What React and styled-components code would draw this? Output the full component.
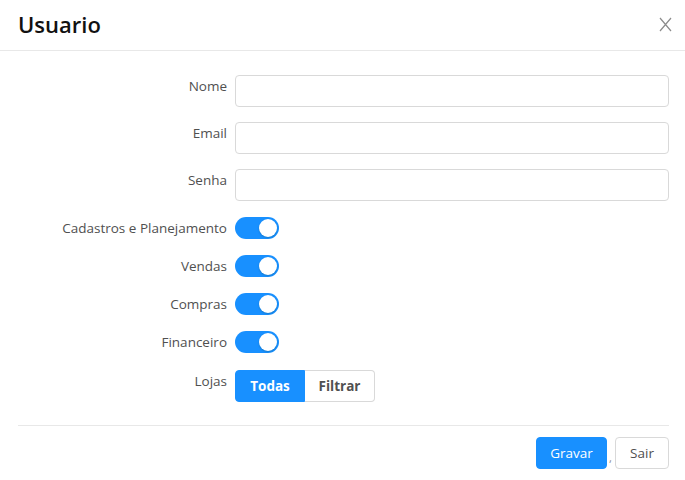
import React from "react";
import styled, { createGlobalStyle } from "styled-components";

const Global = createGlobalStyle`
  html, body { margin: 0; padding: 0; background: #fff; }
  body { font-family: "Open Sans", "Noto Sans", sans-serif; }
  * { box-sizing: border-box; }
`;

const Modal = styled.div`
  width: 685px;
  height: 480px;
  background: #fff;
  display: flex;
  flex-direction: column;
`;

const Header = styled.div`
  height: 51px;
  border-bottom: 1px solid #e8e8e8;
  display: flex;
  align-items: center;
  justify-content: space-between;
  padding: 0 13px 0 18px;
`;

const Title = styled.h1`
  margin: 0;
  font-size: 22px;
  font-weight: 600;
  color: #111;
  line-height: 1;
  margin-top: -2px;
`;

const Close = styled.button`
  border: 0;
  background: transparent;
  padding: 0;
  width: 14px;
  height: 16px;
  display: flex;
  align-items: center;
  justify-content: center;
  cursor: pointer;
  margin-top: -1px;
`;

const Body = styled.div`
  padding: 24px 16px 0 18px;
  display: flex;
  flex-direction: column;
`;

const Row = styled.div`
  display: grid;
  grid-template-columns: 209px 1fr;
  column-gap: 8px;
  align-items: start;
  margin-bottom: ${(p) => p.$mb ?? 0}px;
`;

const Label = styled.label`
  text-align: right;
  font-size: 13.5px;
  line-height: 22px;
  color: #505050;
  white-space: nowrap;
`;

const Input = styled.input`
  height: 32px;
  width: 100%;
  border: 1px solid #d9d9d9;
  border-radius: 4px;
  padding: 4px 11px;
  font-size: 14px;
  font-family: inherit;
  outline: none;
`;

const Switch = styled.button`
  width: 44px;
  height: 22px;
  border-radius: 11px;
  border: 0;
  background: #1890ff;
  padding: 2px;
  display: flex;
  justify-content: flex-end;
  cursor: pointer;
`;

const Knob = styled.span`
  width: 18px;
  height: 18px;
  border-radius: 50%;
  background: #fff;
  box-shadow: 0 1px 2px rgba(0, 35, 11, 0.2);
`;

const Segmented = styled.div`
  display: flex;
`;

const SegButton = styled.button`
  width: 70px;
  height: 32px;
  font-family: inherit;
  font-size: 13.5px;
  font-weight: 700;
  cursor: pointer;
  border: 1px solid ${(p) => (p.$active ? "#1890ff" : "#d9d9d9")};
  background: ${(p) => (p.$active ? "#1890ff" : "#fff")};
  color: ${(p) => (p.$active ? "#fff" : "#505050")};
  border-left-width: ${(p) => (p.$first ? 1 : 0)}px;
  border-radius: ${(p) => (p.$first ? "4px 0 0 4px" : "0 4px 4px 0")};
`;

const Footer = styled.div`
  margin: 23px 16px 0 18px;
  border-top: 1px solid #e8e8e8;
  padding-top: 11px;
  display: flex;
  justify-content: flex-end;
  align-items: flex-end;
`;

const Button = styled.button`
  height: 32px;
  padding: 0 10px;
  font-family: inherit;
  font-size: 13.5px;
  border-radius: 4px;
  cursor: pointer;
  border: 1px solid ${(p) => (p.$primary ? "#1890ff" : "#d9d9d9")};
  background: ${(p) => (p.$primary ? "#1890ff" : "#fff")};
  color: ${(p) => (p.$primary ? "#fff" : "#505050")};
  width: ${(p) => p.$w}px;
`;

const Sep = styled.span`
  font-size: 11px;
  color: #8c8c8c;
  width: 8px;
  padding-left: 2px;
  line-height: 1;
  margin-bottom: 6px;
`;

const fields = ["Nome", "Email", "Senha"];
const toggles = ["Cadastros e Planejamento", "Vendas", "Compras", "Financeiro"];

export default function App() {
  return (
    <Modal>
      <Global />
      <Header>
        <Title>Usuario</Title>
        <Close aria-label="Fechar">
          <svg width="13" height="15" viewBox="0 0 13 15">
            <path d="M1 1 L12 14 M12 1 L1 14" stroke="#8c8c8c" strokeWidth="1.2" fill="none" />
          </svg>
        </Close>
      </Header>
      <Body>
        {fields.map((f, i) => (
          <Row key={f} $mb={i === fields.length - 1 ? 16 : 15}>
            <Label>{f}</Label>
            <Input type={f === "Senha" ? "password" : "text"} />
          </Row>
        ))}
        {toggles.map((t, i) => (
          <Row key={t} $mb={i === toggles.length - 1 ? 17 : 16}>
            <Label>{t}</Label>
            <Switch>
              <Knob />
            </Switch>
          </Row>
        ))}
        <Row>
          <Label>Lojas</Label>
          <Segmented>
            <SegButton $active $first>Todas</SegButton>
            <SegButton>Filtrar</SegButton>
          </Segmented>
        </Row>
      </Body>
      <Footer>
        <Button $primary $w={71}>Gravar</Button>
        <Sep>,</Sep>
        <Button $w={54}>Sair</Button>
      </Footer>
    </Modal>
  );
}
